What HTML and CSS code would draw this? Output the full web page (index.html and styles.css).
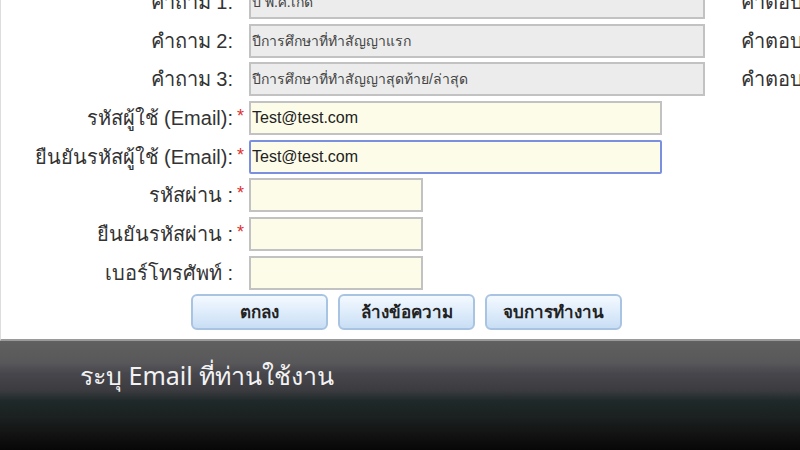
FILE: index.html
```html
<!DOCTYPE html>
<html>
  <head>
    <title>ลงทะเบียน</title>
    <link rel="stylesheet" href="styles.css">
  </head>
  <body>
    <div id="page">
      <div id="form">
        <label class="lbl">คำถาม 1:</label><span class="req"></span>
        <div class="field q">ปี พ.ศ.เกิด</div><span class="ans">คำตอบ</span>

        <label class="lbl">คำถาม 2:</label><span class="req"></span>
        <div class="field q">ปีการศึกษาที่ทำสัญญาแรก</div><span class="ans">คำตอบ</span>

        <label class="lbl">คำถาม 3:</label><span class="req"></span>
        <div class="field q">ปีการศึกษาที่ทำสัญญาสุดท้าย/ล่าสุด</div><span class="ans">คำตอบ</span>

        <label class="lbl">รหัสผู้ใช้ (Email):</label><span class="req">*</span>
        <div class="field wide">Test@test.com</div><span></span>

        <label class="lbl">ยืนยันรหัสผู้ใช้ (Email):</label><span class="req">*</span>
        <div class="field wide focus">Test@test.com</div><span></span>

        <label class="lbl">รหัสผ่าน :</label><span class="req">*</span>
        <div class="field short"></div><span></span>

        <label class="lbl">ยืนยันรหัสผ่าน :</label><span class="req">*</span>
        <div class="field short"></div><span></span>

        <label class="lbl">เบอร์โทรศัพท์ :</label><span class="req"></span>
        <div class="field short"></div><span></span>
      </div>
      <div id="buttons">
        <button>ตกลง</button>
        <button>ล้างข้อความ</button>
        <button>จบการทำงาน</button>
      </div>
    </div>
    <div id="caption">ระบุ Email ที่ท่านใช้งาน</div>
  </body>
</html>
```

FILE: styles.css
```css
* { padding: 0; margin: 0; box-sizing: border-box; }

body {
  width: 800px;
  height: 450px;
  overflow: hidden;
  display: flex;
  flex-direction: column;
  background: white;
  font-family: "Liberation Sans", Tahoma, sans-serif;
}

#page {
  height: 341px;
  overflow: hidden;
  border-left: 1px solid #ddd;
  border-bottom: 2px solid #9a9a9a;
}

#form {
  display: grid;
  grid-template-columns: 232px 16px 456px auto;
  grid-auto-rows: 34px;
  row-gap: 4.7px;
  margin-top: -15px;
  align-items: center;
}

.lbl {
  text-align: right;
  font-size: 20px;
  color: #333;
  white-space: nowrap;
}

.req {
  align-self: start;
  padding: 5px 0 0 4px;
  font-size: 18px;
  color: #e03030;
}

.field {
  height: 34px;
  border: 2px solid #c2c2c2;
  background: #fcfce9;
  padding: 0 1px;
  line-height: 30px;
  font-size: 16px;
  color: #222;
  white-space: nowrap;
  overflow: hidden;
}

.field.q {
  width: 456px;
  background: #ececec;
  font-size: 14px;
  color: #444;
}

.field.wide { width: 413px; }
.field.short { width: 174px; }

.field.focus {
  border-color: #7b8fe0;
  border-radius: 2px;
}

.ans {
  padding-left: 36px;
  font-size: 20px;
  color: #333;
  white-space: nowrap;
}

#buttons {
  display: flex;
  gap: 10px;
  margin: 4px 0 0 190px;
}

#buttons button {
  width: 137px;
  height: 36px;
  border: 2px solid #a9c4e2;
  border-radius: 6px;
  background: linear-gradient(#f4f9ff, #dcebfa 55%, #c9def4);
  font-family: Tahoma, "Liberation Sans", sans-serif;
  font-size: 17px;
  font-weight: bold;
  color: #222;
}

#caption {
  flex: 1;
  padding: 15px 0 0 80px;
  font-family: "Noto Sans", "Open Sans", sans-serif;
  font-size: 25px;
  color: #f2f2f2;
  background: linear-gradient(#606060, #58585a 20%, #46464c 30%, #3c3c40 45%,
    #1f2929 55%, #1b2020 70%, #131313 85%, #070707);
}
```
